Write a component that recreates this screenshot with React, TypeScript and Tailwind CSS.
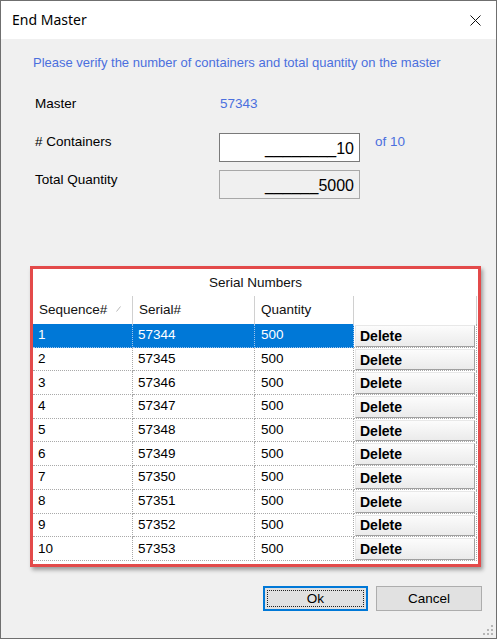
import React from "react";

const rows = Array.from({ length: 10 }, (_, i) => ({
  seq: i + 1,
  serial: 57344 + i,
  qty: 500,
}));

export default function App() {
  return (
    <div className="relative w-[497px] h-[639px] flex flex-col border border-[#6f6f6f] bg-[#f0f0f0] overflow-hidden font-['Liberation_Sans',Arial,sans-serif] text-black">
      {/* title bar */}
      <div className="h-[38px] bg-white flex items-center justify-between pl-[11px] pr-[15px] shrink-0">
        <span className="font-['Noto_Sans',sans-serif] text-[14px] leading-[18px] text-black">
          End Master
        </span>
        <svg width="11" height="11" viewBox="0 0 11 11" className="mt-[1px]">
          <path d="M0.5 0.5 L10.5 10.5 M10.5 0.5 L0.5 10.5" stroke="#111" strokeWidth="1" fill="none" />
        </svg>
      </div>

      {/* client */}
      <div className="flex-1 flex flex-col">
        <div className="mt-[16px] pl-[32px] h-[16px] leading-[16px] text-[13px] text-[#4b6fde]">
          Please verify the number of containers and total quantity on the master
        </div>

        <div className="mt-[25px] flex h-[16px] leading-[16px] text-[13.5px]">
          <div className="w-[219px] pl-[34px]">Master</div>
          <div className="text-[#4b6fde]">57343</div>
        </div>

        <div className="mt-[21px] flex items-start h-[29px] text-[13.5px]">
          <div className="w-[218px] pl-[34px] mt-[1px] leading-[16px]">
            # Containers
          </div>
          <div className="w-[141px] h-[29px] border border-[#7a7a7a] bg-white flex items-center justify-end pr-[5px] pt-[2px] text-[16px] leading-[18px]">
            ________10
          </div>
          <div className="ml-[15px] mt-[1px] leading-[16px] text-[#4b6fde]">of 10</div>
        </div>

        <div className="mt-[8px] flex items-start h-[29px] text-[13.5px]">
          <div className="w-[218px] pl-[34px] mt-[2px] leading-[16px]">
            Total Quantity
          </div>
          <div className="w-[141px] h-[29px] border border-[#a8a8a8] bg-[#f0f0f0] flex items-center justify-end pr-[5px] pt-[2px] text-[16px] leading-[18px]">
            ______5000
          </div>
        </div>

        {/* grid */}
        <div className="mt-[67px] ml-[29px] w-[451px] h-[301px] border-[3px] border-[#e34a4a] bg-white shadow-[2px_3px_4px_rgba(0,0,0,0.35)] flex flex-col text-[13.5px]">
          <div className="h-[27px] flex items-center justify-center leading-[16px] text-[#111]">
            Serial Numbers
          </div>
          <div className="h-[28px] flex leading-[16px] text-[#111]">
            <div className="w-[100px] flex items-center pl-[6px] border-r border-[#d0d0d0]">
              Sequence#
              <svg width="5" height="6" viewBox="0 0 5 6" className="ml-[9px] -mt-[2px]">
                <path d="M0.5 5.5 L4.5 0.5" stroke="#b8b8b8" strokeWidth="1" fill="none" />
              </svg>
            </div>
            <div className="w-[122px] flex items-center pl-[6px] border-r border-[#d0d0d0]">
              Serial#
            </div>
            <div className="w-[99px] flex items-center pl-[6px] border-r border-[#d0d0d0]">
              Quantity
            </div>
            <div className="w-[123px] border-r border-[#d0d0d0]" />
          </div>
          {rows.map((r, i) => {
            const sel = i === 0;
            const cell = sel
              ? "bg-[#0078d7] text-white border-[#9fc4ec]"
              : "bg-white text-black border-[#a9a9a9]";
            return (
              <div key={r.seq} className="h-[23.7px] flex leading-[16px]">
                <div className={`w-[100px] flex items-center pl-[5px] border-r border-b border-dotted ${cell}`}>
                  {r.seq}
                </div>
                <div className={`w-[122px] flex items-center pl-[5px] border-r border-b border-dotted ${cell}`}>
                  {r.serial}
                </div>
                <div className={`w-[99px] flex items-center pl-[6px] border-r border-b border-dotted ${cell}`}>
                  {r.qty}
                </div>
                <div className="w-[123px] flex px-[1px] pt-[1px] border-r border-b border-dotted border-[#a9a9a9] bg-white">
                  <div className="flex-1 flex items-center pl-[4px] border border-t-[#e8e8e8] border-l-[#e8e8e8] border-r-[#a0a0a0] border-b-[#a0a0a0] bg-gradient-to-b from-[#fcfcfc] to-[#ebebeb] font-bold text-[14px] text-black">
                    Delete
                  </div>
                </div>
              </div>
            );
          })}
        </div>

        {/* buttons */}
        <div className="mt-[19px] flex justify-end gap-[8px] pr-[14px] text-[13.5px]">
          <button className="w-[105px] h-[25px] border-2 border-[#0078d7] bg-[#e1e1e1] p-[2px] flex">
            <span className="flex-1 flex items-center justify-center border border-dotted border-[#222] leading-[16px]">
              Ok
            </span>
          </button>
          <button className="w-[106px] h-[25px] border border-[#adadad] bg-[#e1e1e1] flex items-center justify-center leading-[16px]">
            Cancel
          </button>
        </div>
      </div>

      {/* resize grip */}
      <svg width="11" height="11" viewBox="0 0 11 11" className="absolute right-[2px] bottom-[2px]">
        {[
          [8, 0],
          [8, 4],
          [4, 4],
          [8, 8],
          [4, 8],
          [0, 8],
        ].map(([x, y], k) => (
          <rect key={k} x={x} y={y} width="2" height="2" fill="#b5b5b5" />
        ))}
      </svg>
    </div>
  );
}
